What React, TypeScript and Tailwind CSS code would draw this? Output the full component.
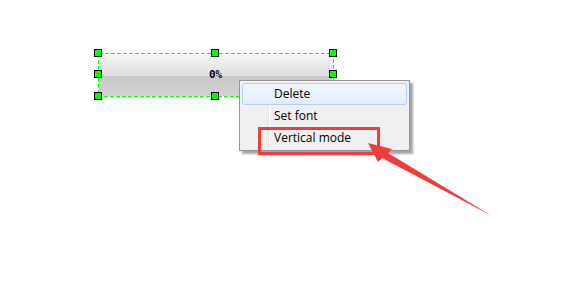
import React from "react";

const Handle = ({ x, y }: { x: number; y: number }) => (
  <div
    className="absolute w-[8px] h-[8px] border border-black bg-[#00ff00]"
    style={{ left: x, top: y }}
  />
);

export default function App() {
  const hx = [94, 211, 329];
  const hy = [49, 70, 92];
  const handles: { x: number; y: number }[] = [];
  hy.forEach((y, i) =>
    hx.forEach((x, j) => {
      if (i === 1 && j === 1) return;
      handles.push({ x, y });
    })
  );
  return (
    <div className="relative w-[576px] h-[302px] bg-white overflow-hidden" style={{ fontFamily: '"Open Sans", "Noto Sans", sans-serif' }}>
      {/* progress bar */}
      <div className="absolute left-[99px] top-[54px] w-[233px] h-[42px] flex flex-col">
        <div className="h-[22px] bg-gradient-to-b from-[#f7f7f7] to-[#dedede]" />
        <div className="flex-1 bg-gradient-to-b from-[#c9c9c9] to-[#d2d2d2]" />
        <div className="absolute inset-0 flex items-center justify-center">
          <span className="text-[11px] font-bold leading-none text-black mt-[-2px]" style={{ fontFamily: '"DejaVu Sans Mono", monospace' }}>0%</span>
        </div>
      </div>
      {/* selection dashed */}
      <svg className="absolute left-0 top-0" width={576} height={302} shapeRendering="crispEdges">
        <rect x={98.5} y={53.5} width={235} height={43} fill="none" stroke="#00ff00" strokeWidth={1} strokeDasharray="4 2" />
      </svg>
      {handles.map((h, i) => (
        <Handle key={i} x={h.x} y={h.y} />
      ))}
      {/* context menu */}
      <div className="absolute left-[239px] top-[80px] w-[171px] h-[71px] border border-[#979797] bg-[#f0f0f0] shadow-[3px_3px_2px_rgba(0,0,0,0.35)] p-[2px]">
        <div className="absolute left-[28px] top-[2px] bottom-[2px] w-[2px] border-l border-[#e2e3e3] bg-transparent border-r border-r-white" />
        <div className="relative flex flex-col text-[12px] text-black">
          <div className="h-[22px] rounded-[3px] border border-[#aecff7] bg-gradient-to-b from-[#f1f6fd] to-[#e4eefb] flex items-center pl-[31px]">Delete</div>
          <div className="h-[22px] flex items-center pl-[32px]">Set font</div>
          <div className="h-[22px] flex items-center pl-[32px]">Vertical mode</div>
        </div>
      </div>
      {/* red annotation box */}
      <div className="absolute left-[258px] top-[127px] w-[122px] h-[28px] border-[3px] border-[#f23c3c]" />
      {/* arrow */}
      <svg className="absolute left-0 top-0" width={576} height={302}>
        <polygon points="368,143 392,149 388,153 492,216 382,158 378,162" fill="#f23c3c" />
      </svg>
    </div>
  );
}
